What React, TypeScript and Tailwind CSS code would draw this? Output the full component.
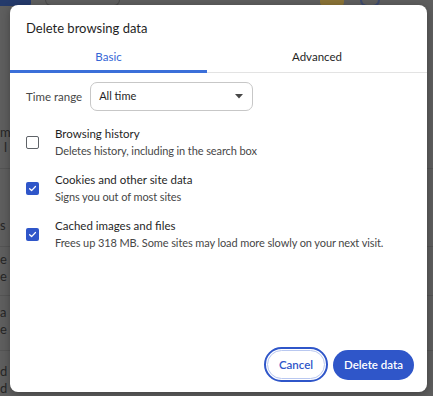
import React from 'react'

function Check({ checked }: { checked: boolean }) {
  if (!checked) {
    return <div className="w-[13px] h-[13px] rounded-[2px] border-[1.5px] border-[#5f6368] bg-white shrink-0" />
  }
  return (
    <div className="w-[13px] h-[13px] rounded-[2px] bg-[#2f56c9] flex items-center justify-center shrink-0">
      <svg width="9" height="9" viewBox="0 0 10 10">
        <path d="M1.8 5.2 L4 7.3 L8.3 2.8" fill="none" stroke="white" strokeWidth="1.4" strokeLinecap="round" strokeLinejoin="round" />
      </svg>
    </div>
  )
}

function Option({ checked, title, desc }: { checked: boolean; title: string; desc: string }) {
  return (
    <div className="flex items-center">
      <div className="w-[29px]">
        <Check checked={checked} />
      </div>
      <div className="flex flex-col">
        <span className="text-[11.5px] leading-[16px] text-[#1f1f1f]">{title}</span>
        <span className="text-[11px] tracking-[-0.1px] leading-[17px] text-[#474747] whitespace-nowrap">{desc}</span>
      </div>
    </div>
  )
}

export default function App() {
  return (
    <div
      className="relative w-[433px] h-[396px] overflow-hidden bg-[#5e5e5e]"
      style={{ fontFamily: 'Lato, "Noto Sans", sans-serif' }}
    >
      {/* dimmed page behind the dialog */}
      <div className="text-[13px] text-[#262626] leading-none">
        <div className="flex items-start h-[20px]">
          <div className="w-[31px] h-[6px] bg-[#243a6b] rounded-br-[3px]" />
          <div className="ml-[14px] w-[75px] h-[6px] border-b border-x border-[#4a4a4a] rounded-b-[6px]" />
          <div className="ml-[200px] w-[24px] h-[6px] bg-[#8a7336] rounded-b-[4px]" />
          <div className="ml-[16px] w-[20px] h-[7px] border-b-2 border-x-2 border-[#3d4a6e] rounded-b-full" />
        </div>
        <div className="h-[106px]" />
        <div className="flex flex-col gap-[2px] w-[10px]">
          <span>m</span>
          <span className="pl-[4px]">l</span>
        </div>
        <div className="mt-[14px] border-t border-[#545454]" />
        <div className="mt-[50px] w-[10px]">s</div>
        <div className="mt-[14px] border-t border-[#545454]" />
        <div className="mt-[6px] flex flex-col gap-[4px] w-[10px]">
          <span>e</span>
          <span>e</span>
        </div>
        <div className="mt-[12px] border-t border-[#545454]" />
        <div className="mt-[10px] flex flex-col gap-[4px] w-[10px]">
          <span>a</span>
          <span>e</span>
        </div>
        <div className="mt-[14px] border-t border-[#545454]" />
        <div className="mt-[14px] flex flex-col gap-[4px] w-[10px]">
          <span>d</span>
          <span>d</span>
        </div>
      </div>

      {/* dialog */}
      <div className="absolute left-[10px] top-[5px] w-[417px] h-[387px] bg-white rounded-[8px] flex flex-col shadow-[0_2px_8px_rgba(0,0,0,0.3)]">
        <h1 className="pl-[16px] pt-[13px] text-[13px] leading-[20px] text-[#1f1f1f]">Delete browsing data</h1>
        <div className="mt-[11px] flex border-b border-[#e3e3e3] h-[24px]">
          <div className="w-[197px] flex justify-center border-b-[3px] border-[#3b6fd9] -mb-px">
            <span className="text-[11.5px] leading-[16px] text-[#3466d6]">Basic</span>
          </div>
          <div className="flex-1 flex justify-center">
            <span className="text-[11.5px] leading-[16px] text-[#1f1f1f]">Advanced</span>
          </div>
        </div>
        <div className="mt-[9px] pl-[16px] flex items-center gap-[8px]">
          <span className="text-[11.5px] text-[#474747]">Time range</span>
          <div className="w-[163px] h-[29px] border border-[#c7c7c7] rounded-[7px] flex items-center justify-between pl-[8px] pr-[9px]">
            <span className="text-[11px] text-[#1f1f1f]">All time</span>
            <svg width="8" height="5" viewBox="0 0 8 5">
              <path d="M0 0 L8 0 L4 4.5 Z" fill="#474747" />
            </svg>
          </div>
        </div>
        <div className="mt-[15px] pl-[16px] flex flex-col gap-[13px]">
          <Option checked={false} title="Browsing history" desc="Deletes history, including in the search box" />
          <Option checked title="Cookies and other site data" desc="Signs you out of most sites" />
          <Option checked title="Cached images and files" desc="Frees up 318 MB. Some sites may load more slowly on your next visit." />
        </div>
        <div className="mt-auto pb-[10px] pr-[13px] flex justify-end items-center gap-[5px]">
          <button className="h-[35px] w-[64px] rounded-full border-2 border-[#2f56c9] bg-white flex items-center justify-center">
            <span className="h-[29px] w-[58px] rounded-full border border-[#b9c8f0] flex items-center justify-center text-[11.5px] font-semibold text-[#2f56c9]">Cancel</span>
          </button>
          <button className="h-[30px] w-[81px] rounded-full bg-[#2f56c9] text-white text-[11.5px] font-semibold">Delete data</button>
        </div>
      </div>
    </div>
  )
}
